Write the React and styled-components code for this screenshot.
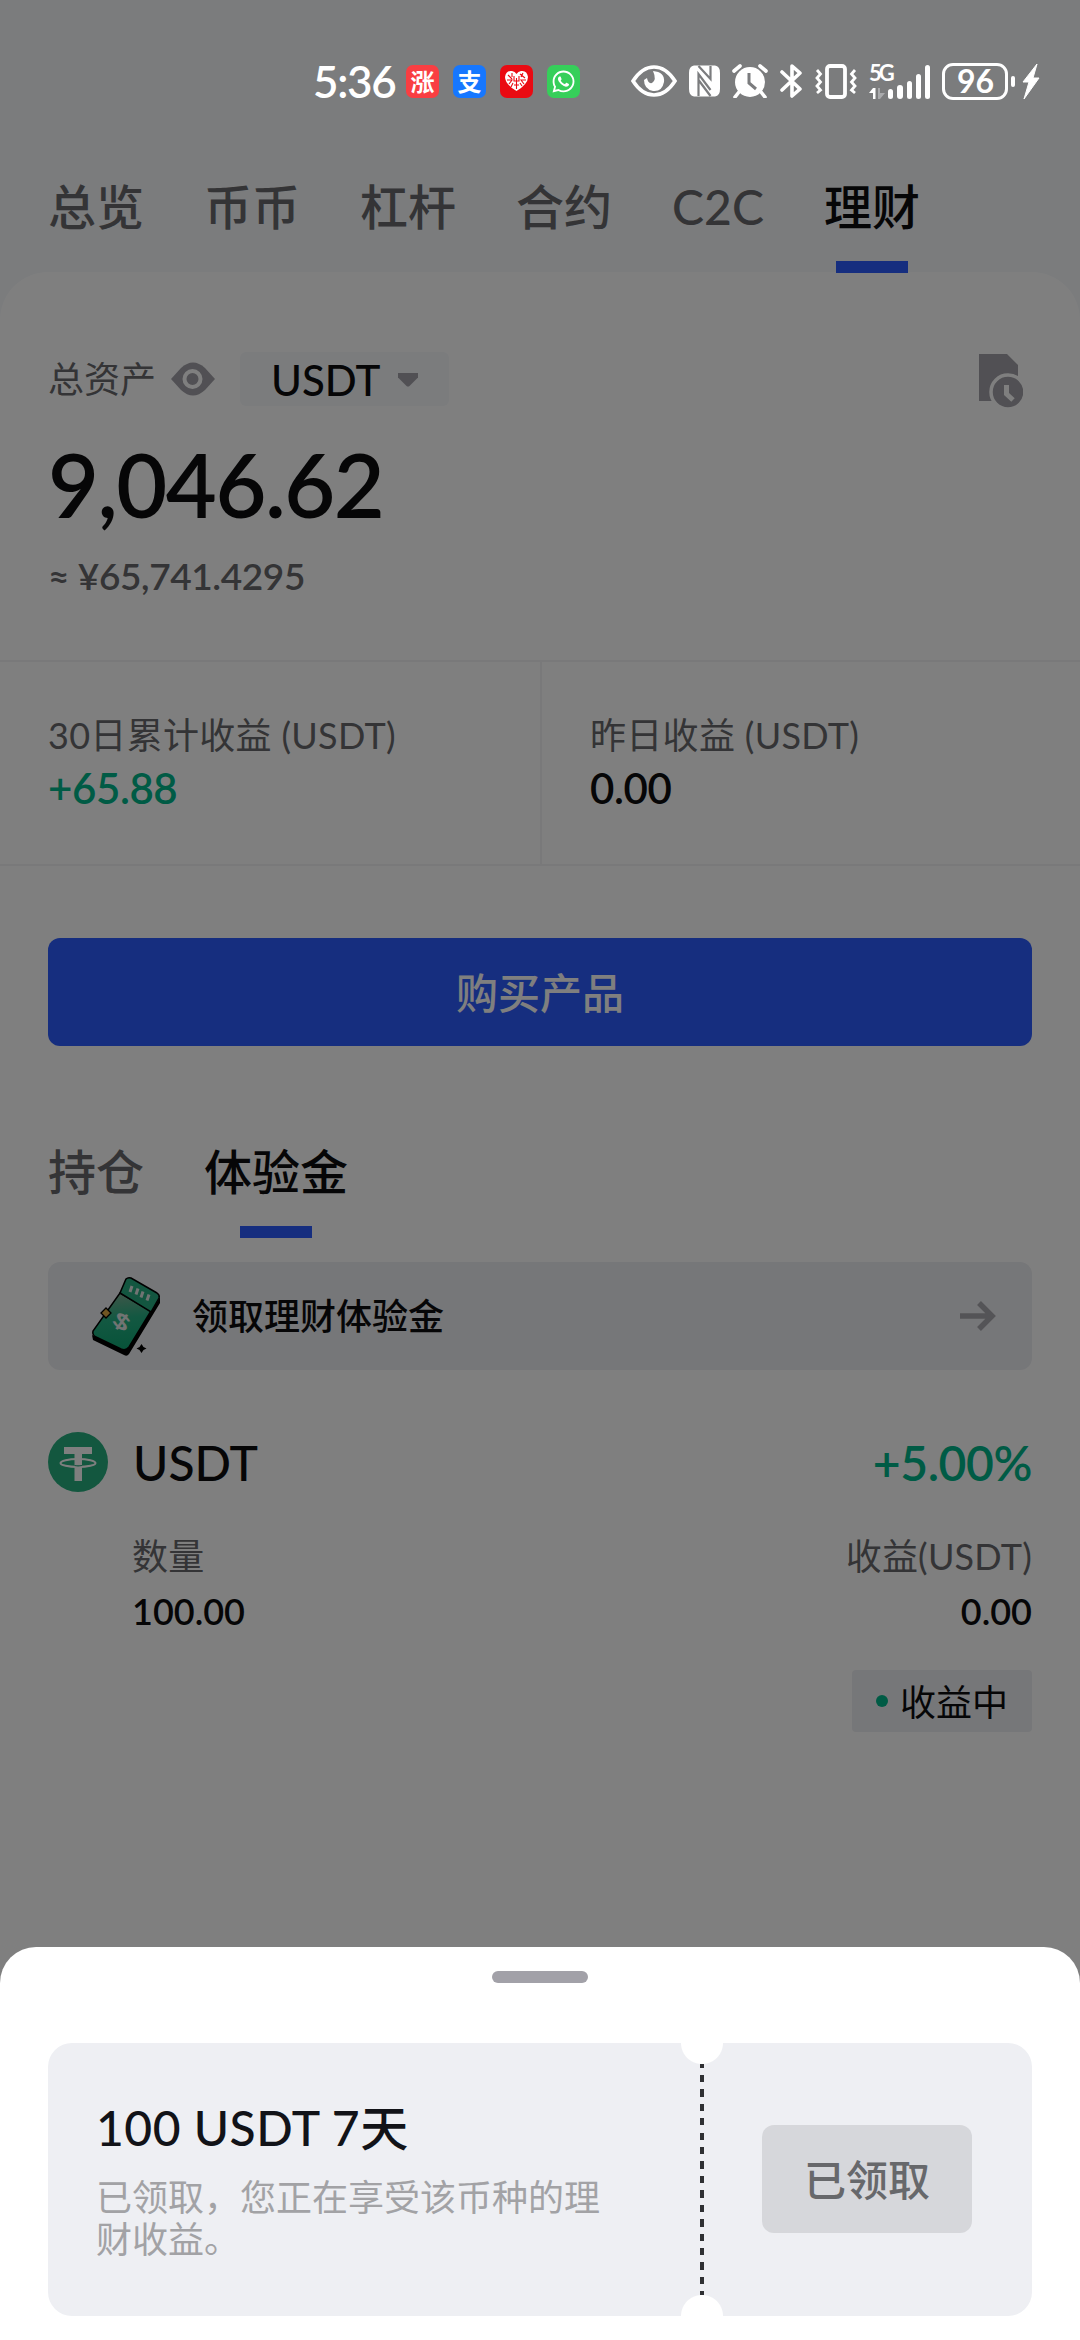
import React from 'react';
import styled, { createGlobalStyle } from 'styled-components';
import { FaWhatsapp } from 'react-icons/fa';

const tabs = ['总览', '币币', '杠杆', '合约', 'C2C', '理财'];

const stats = [
  { id: 1, label: '30日累计收益 (USDT)', value: '+65.88', up: true },
  { id: 2, label: '昨日收益 (USDT)', value: '0.00', up: false },
];

const signalBars = [10, 14, 18, 25, 34];

const App = () => {
  return (
    <>
      <GlobalStyle />
      <Screen>
        <Page>
          <TopTabs>
            {tabs.map((tab) => (
              <Tab key={tab} $active={tab === '理财'}>
                {tab}
              </Tab>
            ))}
          </TopTabs>

          <Panel>
            <Summary>
              <AssetRow>
                <AssetLabel>总资产</AssetLabel>
                <EyeIcon />
                <CurrencySelect>
                  USDT
                  <Caret />
                </CurrencySelect>
                <HistoryIcon />
              </AssetRow>
              <Total>9,046.62</Total>
              <Approx>≈ ¥65,741.4295</Approx>
            </Summary>

            <Stats>
              {stats.map((stat) => (
                <Stat key={stat.id}>
                  <StatLabel>{stat.label}</StatLabel>
                  <StatValue $up={stat.up}>{stat.value}</StatValue>
                </Stat>
              ))}
            </Stats>

            <BuyButton>购买产品</BuyButton>

            <SubTabs>
              <Tab>持仓</Tab>
              <Tab $active>体验金</Tab>
            </SubTabs>

            <Banner>
              <TicketIcon />
              <BannerText>领取理财体验金</BannerText>
              <ArrowIcon />
            </Banner>

            <Holding>
              <TetherIcon />
              <HoldingBody>
                <HoldingLine>
                  <CoinName>USDT</CoinName>
                  <Rate>+5.00%</Rate>
                </HoldingLine>
                <HoldingLabels>
                  <span>数量</span>
                  <span>收益(USDT)</span>
                </HoldingLabels>
                <HoldingValues>
                  <span>100.00</span>
                  <span>0.00</span>
                </HoldingValues>
                <StatusTag>
                  <Dot />
                  收益中
                </StatusTag>
              </HoldingBody>
            </Holding>
          </Panel>
        </Page>

        <Backdrop>
          <StatusBar>
            <Clock>5:36</Clock>
            <AppIcons>
              <AppIcon $bg="#f93e42">涨</AppIcon>
              <AppIcon $bg="#1677ff">支</AppIcon>
              <AppIcon $bg="#ea0a12">
                <HeartIcon />
              </AppIcon>
              <AppIcon $bg="#36cf5a">
                <FaWhatsapp size={25} />
              </AppIcon>
            </AppIcons>
            <SystemIcons />
            <Network>
              <NetworkType>
                5G
                <DataArrows />
              </NetworkType>
              {signalBars.map((height) => (
                <SignalBar key={height} $height={height} />
              ))}
            </Network>
            <Battery>96</Battery>
            <BatteryTip />
            <BoltIcon />
          </StatusBar>

          <Sheet>
            <Handle />
            <Coupon>
              <CouponInfo>
                <CouponTitle>100 USDT 7天</CouponTitle>
                <CouponText>已领取，您正在享受该币种的理财收益。</CouponText>
              </CouponInfo>
              <Tear />
              <CouponAction>
                <ClaimedButton>已领取</ClaimedButton>
              </CouponAction>
            </Coupon>
          </Sheet>
        </Backdrop>
      </Screen>
    </>
  );
};

/* icons */

const EyeIcon = () => (
  <EyeSvg width="44" height="34" viewBox="0 0 44 34">
    <path d="M0 17 L10 6 Q22 -5 34 6 L44 17 L34 28 Q22 39 10 28 Z" fill="#a2a1a8" />
    <circle cx="21.500" cy="17" r="8" fill="#a2a1a8" stroke="#fff" strokeWidth="4" />
  </EyeSvg>
);

const Caret = () => (
  <svg width="20" height="14" viewBox="0 0 20 14">
    <path d="M0 0H20V4.500L11.500 13Q10 14.200 8.500 13L0 4.500Z" fill="#a2a1a8" />
  </svg>
);

const HistoryIcon = () => (
  <HistorySvg width="44" height="54" viewBox="0 0 44 54">
    <path d="M0 0H28L39 11V30H20V47H0Z" fill="#a2a1a8" />
    <circle cx="29" cy="38" r="17" fill="#a2a1a8" stroke="#fff" strokeWidth="3.500" />
    <path d="M27.500 31V40L34 46" fill="none" stroke="#fff" strokeWidth="5" />
  </HistorySvg>
);

const ArrowIcon = () => (
  <ArrowSvg width="36" height="30" viewBox="0 0 36 30">
    <path d="M0 15H32M19 2L32 15L19 28" fill="none" stroke="#a9a9ae" strokeWidth="5.500" />
  </ArrowSvg>
);

const TicketIcon = () => (
  <svg width="70" height="84" viewBox="0 0 70 84">
    <defs>
      <linearGradient id="ticket" x1="0.4" y1="0" x2="0.5" y2="1">
        <stop offset="0" stopColor="#7fae93" />
        <stop offset="0.45" stopColor="#26b184" />
        <stop offset="1" stopColor="#0fa673" />
      </linearGradient>
    </defs>
    <path d="M1 61L2 66L33 81Q36 83 38 80L69 29V23L60 38L32 74Z" fill="#000" />
    <path
      d="M29 19L60 37L38 73Q35 77 30 75L5 63Q1 61 2 57Z"
      fill="url(#ticket)"
      stroke="#000"
      strokeWidth="1.500"
    />
    <path
      d="M35 5Q37 3 40 4L66 19Q69 21 68 24L60 38L29 19Z"
      fill="#26ad80"
      stroke="#000"
      strokeWidth="1.500"
    />
    <path d="M41 12L39 18M47 14.500L45 20.500M52 17.500L50 23.500M58 20.500L56 26.500" stroke="#e3e9e6" strokeWidth="3" />
    <TicketSign transform="translate(30.500 48) rotate(28) skewY(10) scale(1.3 0.85)" y="8">
      $
    </TicketSign>
    <path d="M15 34L20 39L15 44L10 39Z" fill="#e0ac45" stroke="#000" strokeWidth="1.300" />
    <path d="M50.500 70L52.500 73L55.500 74.500L52.500 76L50.500 79L48.500 76L45.500 74.500L48.500 73Z" fill="#000" />
  </svg>
);

const TetherIcon = () => (
  <svg width="60" height="60" viewBox="0 0 60 60">
    <circle cx="30" cy="30" r="30" fill="#26ae7e" />
    <path d="M16 15H44V22H34V49H26.500V22H16Z" fill="#fff" />
    <ellipse cx="30" cy="31" rx="17.500" ry="4" fill="none" stroke="#fff" strokeWidth="2" />
    <path d="M26.500 33.500Q30 34.300 34 33.500" fill="none" stroke="#26a17b" strokeWidth="1.200" />
  </svg>
);

const HeartIcon = () => (
  <svg width="25" height="22" viewBox="0 0 25 22">
    <path d="M12.500 21Q1 14 1 7Q2 0 8 1Q11 1.500 12.500 4Q14 1.500 17 1Q23 0 24 7Q24 14 12.500 21Z" fill="#fff" />
    <path
      d="M4 5L8 9M8 3V7M3 10H8L5 14M10 6V11H15V6M12.500 8V19M16 4L21 8M22 10H17L20 14M9 13L7 17M16 13L18 16M10 15H15M19 3L17 7"
      fill="none"
      stroke="#ea0a12"
      strokeWidth="1.100"
    />
  </svg>
);

// eye comfort, nfc, alarm, bluetooth and vibrate
const SystemIcons = () => (
  <SystemGroup>
    <svg width="46" height="32" viewBox="0 0 46 32">
      <path d="M2 16Q11 2 23 2T44 16Q35 30 23 30T2 16Z" fill="none" stroke="#fff" strokeWidth="3.600" />
      <path d="M22 6Q34 7 33 17Q31 27 22 26Q13 24 13 15L16 13Q17 19 21 18Q26 15 22 6Z" fill="#fff" />
    </svg>
    <svg width="31" height="32" viewBox="0 0 31 32">
      <path d="M5 0.500H26Q31 1 31 8V24Q31 31 26 31.500H5Q0 31 0 24V8Q0 1 5 0.500Z" fill="#fff" />
      <path
        d="M9.500 31V9L21.500 25M9.500 1L21.500 14V1M9.500 15L21.500 31"
        fill="none"
        stroke="#7b7c7e"
        strokeWidth="2.200"
      />
    </svg>
    <svg width="36" height="34" viewBox="0 0 36 34">
      <circle cx="18" cy="18" r="15" fill="#fff" />
      <path
        d="M2 7L8 2M34 7L28 2M7 28L3 33M29 28L33 33"
        stroke="#fff"
        strokeWidth="3.600"
        strokeLinecap="round"
      />
      <path d="M17 9V19L24 25" fill="none" stroke="#7b7c7e" strokeWidth="3" />
    </svg>
    <svg width="23" height="36" viewBox="0 0 23 36">
      <path
        d="M2 9L20 26L12 33V3L20 10L2 27"
        fill="none"
        stroke="#fff"
        strokeWidth="3.600"
        strokeLinecap="round"
        strokeLinejoin="round"
      />
    </svg>
    <svg width="42" height="35" viewBox="0 0 42 35">
      <rect x="12" y="2" width="18" height="31" rx="3" fill="none" stroke="#fff" strokeWidth="3.800" />
      <path
        d="M2 6L5.500 10L2 14L5.500 18L2 22L5.500 26L2 29M40 6L36.500 10L40 14L36.500 18L40 22L36.500 26L40 29"
        fill="none"
        stroke="#fff"
        strokeWidth="2.800"
      />
    </svg>
  </SystemGroup>
);

const DataArrows = () => (
  <svg width="16" height="11" viewBox="0 0 16 11">
    <path d="M0 5L4 0H6.500V11H4V5Z" fill="#fff" />
    <path d="M9 0H11V5L16 5L11 11H9Z" fill="#a9aaac" />
  </svg>
);

const BoltIcon = () => (
  <BoltSvg width="18" height="37" viewBox="0 0 18 37">
    <path
      d="M15 1L1 19H7L2 36L17 15H11Z"
      fill="#fff"
      stroke="#fff"
      strokeWidth="1"
      strokeLinejoin="round"
    />
  </BoltSvg>
);

/* styles */

const GlobalStyle = createGlobalStyle`
  * {
    box-sizing: border-box;
  }

  body {
    margin: 0;
    font-family: Lato, "Noto Sans CJK SC", sans-serif;
    color: #0d0d0e;
  }

  svg {
    display: block;
    flex-shrink: 0;
  }
`;

const Screen = styled.div`
  position: relative;
  width: 1080px;
  height: 2340px;
  overflow: hidden;
`;

const Page = styled.div`
  isolation: isolate;
  height: 100%;
  padding-top: 162px;
  background: #f6f8fb;
`;

const TopTabs = styled.nav`
  position: relative;
  z-index: 1;
  display: flex;
  gap: 60px;
  height: 111px;
  padding: 21px 48px 0;
`;

const Tab = styled.div`
  display: flex;
  flex-direction: column;
  align-items: center;
  font-size: 48px;
  font-weight: 500;
  line-height: 48px;
  white-space: nowrap;
  color: ${({ $active }) => ($active ? '#0d0d0e' : '#68696c')};

  &::after {
    content: '';
    width: 72px;
    height: 12px;
    margin-top: 30px;
    background: ${({ $active }) => ($active ? '#2c5cfe' : 'transparent')};
  }
`;

const Panel = styled.main`
  height: 2068px;
  margin-top: -1px;
  border-radius: 48px 48px 0 0;
  background: #fff;
`;

const Summary = styled.section`
  height: 388px;
  padding: 80px 48px 0;
`;

const AssetRow = styled.div`
  display: flex;
  align-items: center;
  height: 54px;
`;

const AssetLabel = styled.span`
  font-size: 36px;
  line-height: 54px;
  color: #68696c;
`;

const EyeSvg = styled.svg`
  margin-left: 15px;
`;

const CurrencySelect = styled.div`
  display: flex;
  align-items: center;
  justify-content: space-between;
  width: 209px;
  height: 54px;
  margin-left: 25px;
  padding: 2px 31px 0 31px;
  border-radius: 6px;
  background: #f6f8fb;
  font-size: 42px;
  font-weight: 500;
  line-height: 52px;
`;

const HistorySvg = styled.svg`
  margin: 4px 9px 0 auto;
`;

const Total = styled.div`
  margin-top: 28px;
  font-size: 88px;
  font-weight: 600;
  line-height: 100px;
  letter-spacing: -1.5px;
`;

const Approx = styled.div`
  margin-top: 18px;
  font-size: 37px;
  font-weight: 600;
  line-height: 48px;
  letter-spacing: -0.4px;
  color: #68696c;
`;

const Stats = styled.section`
  display: grid;
  grid-template-columns: 1fr 1fr;
  height: 206px;
  border-top: 2px solid #f3f3f5;
  border-bottom: 2px solid #f3f3f5;
`;

const Stat = styled.div`
  padding: 49px 0 0 48px;

  & + & {
    border-left: 2px solid #f3f3f5;
  }
`;

const StatLabel = styled.div`
  font-size: 36px;
  line-height: 48px;
  letter-spacing: 0.3px;
  color: #68696c;
`;

const StatValue = styled.div`
  margin-top: 4px;
  font-size: 42px;
  font-weight: 600;
  line-height: 50px;
  letter-spacing: -0.4px;
  color: ${({ $up }) => ($up ? '#00b68a' : '#0d0d0e')};
`;

const BuyButton = styled.button`
  display: block;
  width: 984px;
  height: 108px;
  margin: 72px 48px 0;
  padding: 0 0 4px;
  border: none;
  border-radius: 12px;
  background: #2c5cfe;
  color: #fff;
  font-family: inherit;
  font-size: 42px;
  font-weight: 500;
`;

const SubTabs = styled.nav`
  display: flex;
  gap: 60px;
  height: 216px;
  padding: 102px 48px 0;
`;

const Banner = styled.div`
  display: flex;
  align-items: center;
  height: 108px;
  margin: 0 48px;
  padding: 0 36px 0 43px;
  border-radius: 12px;
  background: #edeef2;
`;

const BannerText = styled.span`
  margin-left: 31px;
  padding-bottom: 4px;
  font-size: 36px;
  font-weight: 500;
`;

const TicketSign = styled.text`
  fill: #e3e9e6;
  font-size: 23px;
  font-weight: 900;
  text-anchor: middle;
`;

const ArrowSvg = styled.svg`
  margin-left: auto;
`;

const Holding = styled.section`
  display: flex;
  gap: 24px;
  padding: 62px 48px 0;
`;

const HoldingBody = styled.div`
  display: flex;
  flex: 1;
  flex-direction: column;
`;

const HoldingLine = styled.div`
  display: flex;
  justify-content: space-between;
  font-size: 48px;
  line-height: 62px;
`;

const CoinName = styled.span`
  padding-left: 1px;
  font-weight: 500;
`;

const Rate = styled.span`
  font-weight: 600;
  letter-spacing: -0.4px;
  color: #00b68a;
`;

const HoldingLabels = styled(HoldingLine)`
  margin-top: 38px;
  font-size: 36px;
  line-height: 48px;
  letter-spacing: 0.2px;
  color: #68696c;
`;

const HoldingValues = styled(HoldingLine)`
  margin-top: 7px;
  font-size: 36px;
  font-weight: 600;
  line-height: 48px;
`;

const StatusTag = styled.div`
  display: flex;
  align-items: center;
  align-self: flex-end;
  gap: 12px;
  height: 62px;
  margin-top: 35px;
  padding: 0 24px 3px;
  border-radius: 4px;
  background: #edeef2;
  font-size: 36px;
`;

const Dot = styled.span`
  width: 12px;
  height: 12px;
  margin-top: 2px;
  border-radius: 50%;
  background: #00b68a;
`;

const Backdrop = styled.div`
  position: absolute;
  inset: 0;
  display: flex;
  flex-direction: column;
  justify-content: space-between;
  background: rgba(0, 0, 0, 0.5);
`;

const StatusBar = styled.header`
  display: flex;
  align-items: center;
  height: 162px;
  padding-left: 313px;
  color: #fff;
`;

const Clock = styled.div`
  width: 93px;
  font-size: 44px;
  font-weight: 600;
  line-height: 60px;
  letter-spacing: -1.3px;
  white-space: nowrap;
`;

const AppIcons = styled.div`
  display: flex;
  gap: 14px;
`;

const AppIcon = styled.div`
  display: flex;
  align-items: center;
  justify-content: center;
  width: 33px;
  height: 33px;
  border-radius: 7px;
  background: ${({ $bg }) => $bg};
  font-size: 24px;
  font-weight: 700;
  line-height: 31px;
`;

const SystemGroup = styled.div`
  display: flex;
  align-items: center;
  gap: 12px;
  margin-left: 51px;
`;

const Network = styled.div`
  display: flex;
  align-items: flex-end;
  gap: 4px;
  height: 35px;
  margin-left: 12px;
`;

const NetworkType = styled.div`
  display: flex;
  flex-direction: column;
  justify-content: space-between;
  width: 15px;
  height: 35px;
  font-size: 22px;
  font-weight: 700;
  line-height: 18px;
  letter-spacing: -3px;
`;

const SignalBar = styled.span`
  width: 5.3px;
  height: ${({ $height }) => $height}px;
  border-radius: 3px;
  background: #fff;
`;

const Battery = styled.div`
  width: 66px;
  height: 37px;
  margin-left: 12px;
  border: 3px solid #fff;
  border-radius: 11px;
  font-size: 32px;
  font-weight: 700;
  line-height: 30px;
  text-align: center;
`;

const BatteryTip = styled.span`
  width: 4px;
  height: 11px;
  margin-left: 3px;
  border-radius: 2px;
  background: #fff;
`;

const BoltSvg = styled.svg`
  margin-left: 7px;
`;

const Sheet = styled.section`
  height: 393px;
  padding: 24px 48px 0;
  border-radius: 36px 36px 0 0;
  background: #fff;
`;

const Handle = styled.div`
  width: 96px;
  height: 12px;
  margin: 0 auto;
  border-radius: 6px;
  background: #a2a1a8;
`;

const Coupon = styled.div`
  display: flex;
  height: 273px;
  margin-top: 60px;
  border-radius: 24px;
  background: #eeeff3;
  overflow: hidden;
`;

const CouponInfo = styled.div`
  width: 633px;
  padding: 55px 72px 0 48px;
`;

const CouponTitle = styled.h2`
  margin: 0;
  font-size: 48px;
  font-weight: 500;
  line-height: 60px;
  letter-spacing: 0.5px;
  color: #121318;
`;

const CouponText = styled.p`
  margin: 18px 0 0;
  font-size: 36px;
  line-height: 42px;
  color: #a2a2a5;
`;

// perforation with a half circle cut out at both ends
const Tear = styled.div`
  display: flex;
  flex-direction: column;
  align-items: center;
  width: 42px;
  background:
    radial-gradient(circle at 21px 0, #fff 20.5px, transparent 21.5px),
    radial-gradient(circle at 21px 100%, #fff 20.5px, transparent 21.5px);

  &::before {
    content: '';
    width: 4px;
    height: 231px;
    margin-top: 21px;
    background: repeating-linear-gradient(
      #2f3033 0,
      #2f3033 3.7px,
      transparent 3.7px,
      transparent 10.74px,
      #2f3033 10.74px,
      #2f3033 14.44px
    );
  }
`;

const CouponAction = styled.div`
  padding: 82px 0 0 39px;
`;

const ClaimedButton = styled.button`
  width: 210px;
  height: 108px;
  padding: 0 0 4px;
  border: none;
  border-radius: 12px;
  background: #d6d7db;
  color: #67686b;
  font-family: inherit;
  font-size: 42px;
  font-weight: 500;
`;

export default App;
